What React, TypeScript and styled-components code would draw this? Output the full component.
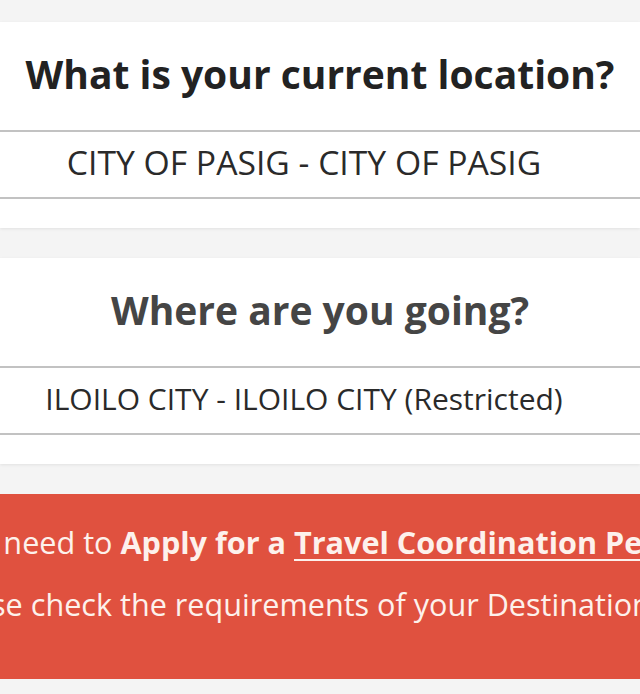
import styled, { createGlobalStyle } from 'styled-components';

const GlobalStyle = createGlobalStyle`
  html, body {
    margin: 0;
    padding: 0;
    background: #f4f4f4;
    font-family: 'Open Sans', 'Liberation Sans', sans-serif;
    overflow: hidden;
  }
`;

const Page = styled.div`
  width: 640px;
  height: 694px;
  padding-top: 22px;
  box-sizing: border-box;
  display: flex;
  flex-direction: column;
  gap: 30px;
  overflow: hidden;
`;

const Card = styled.section`
  background: #fff;
  box-shadow: 0 1px 3px rgba(0, 0, 0, 0.08);
  padding-bottom: 29px;
`;

const Question = styled.h2<{ $muted?: boolean }>`
  margin: 0;
  padding: 25px 0 29px;
  font-size: 39px;
  line-height: 54px;
  font-weight: 700;
  text-align: center;
  color: ${(p) => (p.$muted ? '#454545' : '#222')};
`;

const Select = styled.div<{ $size: number }>`
  height: 60px;
  padding: 0 32px 5px 0;
  border-top: 2px solid #c2c2c2;
  border-bottom: 2px solid #c2c2c2;
  display: flex;
  align-items: center;
  justify-content: center;
  font-size: ${(p) => p.$size}px;
  color: #2a2a2a;
  white-space: nowrap;
`;

const Notice = styled.div`
  flex-shrink: 0;
  background: #e0513f;
  padding: 26px 0 52px 10px;
  display: flex;
  flex-direction: column;
  align-items: center;
  gap: 17px;
  overflow: hidden;
  color: #fdf1ec;
`;

const NoticeLine = styled.p`
  margin: 0;
  font-size: 30.6px;
  line-height: 45px;
  white-space: nowrap;
`;

const PermitLink = styled.a`
  color: inherit;
  font-weight: 700;
  text-decoration: underline;
  text-decoration-thickness: 2px;
  text-underline-offset: 5px;
`;

export default function App() {
  return (
    <>
      <GlobalStyle />
      <Page>
        <Card>
          <Question>What is your current location?</Question>
          <Select $size={33.7}>CITY OF PASIG - CITY OF PASIG</Select>
        </Card>
        <Card>
          <Question $muted>Where are you going?</Question>
          <Select $size={30}>ILOILO CITY - ILOILO CITY (Restricted)</Select>
        </Card>
        <Notice>
          <NoticeLine>
            You need to <b>Apply for a</b>{' '}
            <PermitLink href="#">Travel Coordination Permit</PermitLink>
          </NoticeLine>
          <NoticeLine>Please check the requirements of your Destination LGU</NoticeLine>
        </Notice>
      </Page>
    </>
  );
}
